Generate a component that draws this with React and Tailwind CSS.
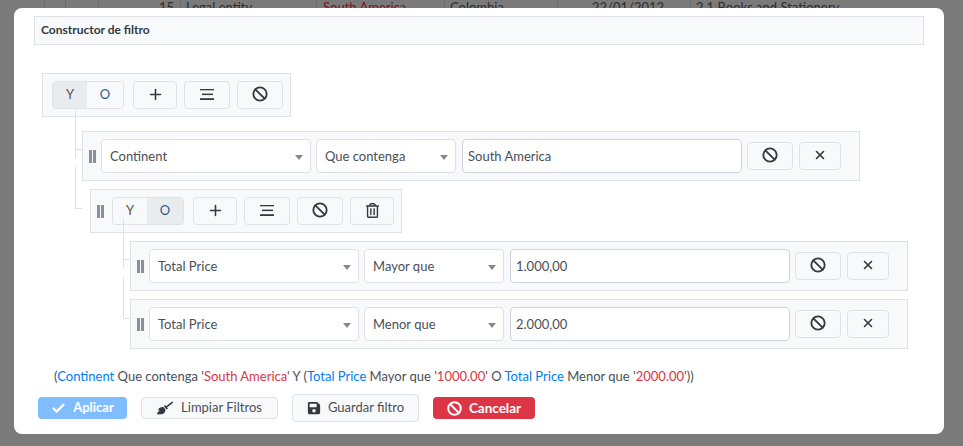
import { Ban, Check, Plus, X } from "lucide-react";
import { FaBroom, FaRegTrashAlt, FaSave } from "react-icons/fa";

const font = { fontFamily: 'Lato, "Noto Sans", sans-serif' };

// connector drawn from the parent down to the item, second part ends on the item's mid line
function Tree({ x = "-left-2", first }) {
  if (first) {
    return (
      <>
        <span className={`absolute ${x} top-[-24px] w-2 h-[42px] border-l border-b border-[#dee2e6]`} />
        <span className={`absolute ${x} top-[18px] h-2 border-l border-[#dee2e6]`} />
      </>
    );
  }
  return <span className={`absolute ${x} top-[-23px] w-2 h-[42px] border-l border-b border-[#dee2e6]`} />;
}

function Btn({ children, className = "" }) {
  return (
    <button type="button" className={`h-7 pb-0.5 flex items-center justify-center shrink-0 rounded border border-[#dee2e6] bg-[#f8f9fa] text-[#343a40] ${className}`}>
      {children}
    </button>
  );
}

function Lines() {
  return (
    <svg width="14" height="11" viewBox="0 0 14 11" fill="#343a40">
      <rect x="0" y="0" width="14" height="1.3" />
      <rect x="2" y="4.6" width="11" height="1.5" />
      <rect x="0" y="9.2" width="14" height="1.8" />
    </svg>
  );
}

function Handle() {
  return (
    <span className="flex gap-[1.5px] h-[13px] w-[7px] shrink-0">
      <span className="w-[2.5px] bg-[#8a9099]" />
      <span className="w-[2.5px] bg-[#8a9099]" />
    </span>
  );
}

function AndOr({ active }) {
  return (
    <div className="flex h-7 w-[72px] shrink-0 rounded border border-[#dee2e6] overflow-hidden text-[13px]">
      <span className={`w-[34px] flex items-center justify-center text-[#5a5048] ${active === "Y" ? "bg-[#e9ecef]" : "bg-[#f8f9fa]"}`}>Y</span>
      <span className={`flex-1 flex items-center justify-center text-[#2f5a8a] ${active === "O" ? "bg-[#e9ecef]" : "bg-[#f8f9fa]"}`}>O</span>
    </div>
  );
}

function Select({ value, className }) {
  return (
    <div className={`h-[34px] flex items-center justify-between rounded border border-[#dee2e6] bg-white pl-2 pr-[7px] text-[13px] text-[#495057] ${className}`}>
      <span className="mt-0.5">{value}</span>
      <span className="mt-0.5 border-x-[4px] border-t-[5px] border-x-transparent border-t-[#888]" />
    </div>
  );
}

function Rule({ field, op, value, first }) {
  return (
    <div className="relative w-[778px] h-[50px] flex items-center border border-[#dee2e6] bg-[#f8f9fa] pl-[6px]">
      <Tree first={first} />
      <Handle />
      <Select value={field} className="w-[210px] ml-[5px]" />
      <Select value={op} className="w-[140px] ml-[5px]" />
      <div className="w-[280px] h-[34px] ml-[6px] pt-0.5 flex items-center rounded border border-[#ced4da] bg-white px-[5px] text-[13px] text-[#495057]">{value}</div>
      <Btn className="w-[46px] ml-[5px]"><Ban size={16} strokeWidth={2.8} /></Btn>
      <Btn className="w-[42px] ml-[6px]"><X size={14} strokeWidth={2.8} /></Btn>
    </div>
  );
}

function Val({ children }) {
  return <span className="text-[#dc3545]">{children}</span>;
}

function Field({ children }) {
  return <span className="text-[#007bff]">{children}</span>;
}

export default function App() {
  return (
    <div style={font} className="w-[963px] h-[446px] bg-[#7a7a7a] overflow-hidden">
      <div className="h-2 overflow-hidden flex text-[13px] text-[#2c2c2c] leading-[14px]">
        <div className="w-[45px] border-r border-[#6b6b6b]" />
        <div className="w-[21px] border-r border-[#6b6b6b]" />
        <div className="w-[33px] border-r border-[#6b6b6b]" />
        <div className="w-[82px] border-r border-[#6b6b6b] text-right pr-[6px]">15</div>
        <div className="w-[136px] border-r border-[#6b6b6b] pl-[5px]">Legal entity</div>
        <div className="w-[128px] border-r border-[#6b6b6b] pl-[6px] text-[#7a0f18]">South America</div>
        <div className="w-[113px] border-r border-[#6b6b6b] pl-[5px]">Colombia</div>
        <div className="w-[133px] border-r border-[#6b6b6b] pl-[34px]">22/01/2012</div>
        <div className="flex-1 pl-[5px]">2.1 Books and Stationery</div>
      </div>
      <div className="ml-[14px] w-[930px] h-[426px] rounded-lg bg-white pt-2 px-5">
        <div className="h-[29px] flex items-center border border-[#dee2e6] bg-[#f8f9fa] pl-[6px] pb-px text-[12px] font-bold text-[#343a40]">
          Constructor de filtro
        </div>

        <div className="mt-7 ml-2 w-[249px] h-11 flex items-center border border-[#dee2e6] bg-[#f8f9fa] pl-[9px]">
          <AndOr active="Y" />
          <Btn className="w-11 ml-[9px]"><Plus size={17} strokeWidth={2.2} /></Btn>
          <Btn className="w-[46px] ml-[7px]"><Lines /></Btn>
          <Btn className="w-[46px] ml-[7px]"><Ban size={16} strokeWidth={2.8} /></Btn>
        </div>

        <div className="ml-12 mt-[14px]">
          <Rule field="Continent" op="Que contenga" value="South America" first />
          <div className="relative ml-2 mt-2 w-[312px] h-11 flex items-center border border-[#dee2e6] bg-[#f8f9fa] pl-[6px]">
            <Tree x="-left-4" />
            <Handle />
            <div className="ml-2"><AndOr active="O" /></div>
            <Btn className="w-11 ml-[9px]"><Plus size={17} strokeWidth={2.2} /></Btn>
            <Btn className="w-[46px] ml-[7px]"><Lines /></Btn>
            <Btn className="w-[46px] ml-[7px]"><Ban size={16} strokeWidth={2.8} /></Btn>
            <Btn className="w-11 ml-[7px]"><FaRegTrashAlt size={15} /></Btn>
          </div>
          <div className="ml-12 mt-2 flex flex-col gap-2">
            <Rule field="Total Price" op="Mayor que" value="1.000,00" first />
            <Rule field="Total Price" op="Menor que" value="2.000,00" />
          </div>
        </div>

        <p className="mt-[18px] ml-5 text-[13px] leading-[18px] text-[#495057]">
          (<Field>Continent</Field> Que contenga '<Val>South America</Val>' Y (<Field>Total Price</Field> Mayor que '<Val>1000.00</Val>' O <Field>Total Price</Field> Menor que '<Val>2000.00</Val>'))
        </p>

        <div className="mt-[9px] ml-1 flex items-center text-[13px]">
          <button type="button" className="w-[89px] h-[22px] flex items-center justify-center gap-[7px] rounded bg-[#80bdff] font-bold text-white">
            <Check size={15} strokeWidth={3.5} />Aplicar
          </button>
          <button type="button" className="ml-[14px] w-[137px] h-[22px] flex items-center justify-center gap-2 rounded border border-[#dee2e6] bg-[#f8f9fa] text-[#495057]">
            <FaBroom size={16} className="text-[#343a40]" />Limpiar Filtros
          </button>
          <button type="button" className="ml-[14px] w-[127px] h-7 flex items-center justify-center gap-[7px] rounded border border-[#dee2e6] bg-[#f8f9fa] text-[#495057]">
            <FaSave size={14} className="text-[#343a40]" />Guardar filtro
          </button>
          <button type="button" className="ml-[14px] w-[102px] h-[22px] flex items-center justify-center gap-[7px] rounded bg-[#dc3545] text-[13.5px] font-bold text-white">
            <Ban size={15} strokeWidth={3.2} />Cancelar
          </button>
        </div>
      </div>
    </div>
  );
}
